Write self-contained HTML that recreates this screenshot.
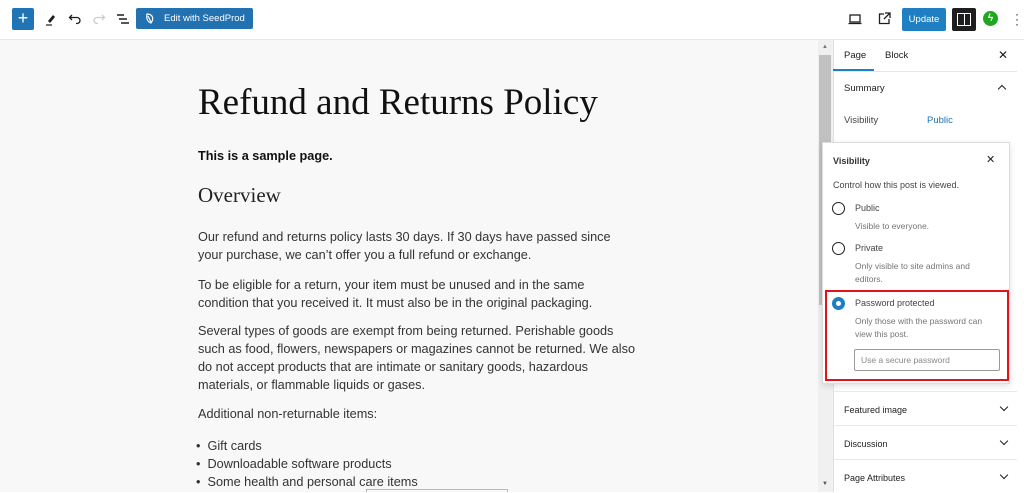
<!DOCTYPE html>
<html><head><meta charset="utf-8"><style>
*{margin:0;padding:0;box-sizing:border-box}
body{width:1024px;height:492px;overflow:hidden;background:#fff;font-family:"Liberation Sans",sans-serif;position:relative;color:#1e1e1e}
.a{position:absolute}
.top{left:0;top:0;width:1024px;height:40px;background:#fff;border-bottom:1px solid #e6e6e6}
.content{left:0;top:40px;width:818px;height:452px;background:#f8f8f8}
.p{position:absolute;left:198px;font-size:12.7px;color:#333;line-height:18px;white-space:nowrap}
.side{left:833px;top:40px;width:191px;height:452px;background:#fff;border-left:1px solid #e0e0e0}
.row{position:absolute;left:833px;width:184px;border-top:1px solid #e8e8e8;font-size:9px;color:#1e1e1e}
.chev{position:absolute;right:10px;top:0;width:6px;height:6px;border-right:1.3px solid #1e1e1e;border-bottom:1.3px solid #1e1e1e;transform:rotate(45deg)}
.rad{position:absolute;width:13px;height:13px;border:1.3px solid #1e1e1e;border-radius:50%}
.g{color:#757575;font-size:8.5px;line-height:13px}
</style></head><body>
<div class="a top"></div>
<div class="a" style="left:12px;top:8px;width:22px;height:22px;background:#1e74b5;border-radius:2px;color:#fff;font-size:18px;line-height:21px;text-align:center">+</div>
<svg class="a" style="left:44px;top:12px" width="14" height="14" viewBox="0 0 14 14"><path d="M4 9 L9 3 L11 5 L6 11Z" fill="#1e1e1e"/><path d="M2 13 H8" stroke="#1e1e1e" stroke-width="1.2"/></svg>
<svg class="a" style="left:68px;top:12px" width="14" height="14" viewBox="0 0 14 14"><path d="M4 3 L1.5 5.5 L4 8 M2 5.5 H9 A3 3 0 0 1 9 11.5 H8" fill="none" stroke="#1e1e1e" stroke-width="1.3"/></svg>
<svg class="a" style="left:92px;top:12px" width="14" height="14" viewBox="0 0 14 14"><path d="M10 3 L12.5 5.5 L10 8 M12 5.5 H5 A3 3 0 0 0 5 11.5 H6" fill="none" stroke="#ccc" stroke-width="1.3"/></svg>
<svg class="a" style="left:116px;top:12px" width="14" height="14" viewBox="0 0 14 14"><path d="M1 3 H8 M3 7 H11 M5 11 H13" stroke="#1e1e1e" stroke-width="1.4"/></svg>
<div class="a" style="left:136px;top:8px;width:117px;height:21px;background:#2271b1;border-radius:2px;color:#fff;font-size:9.5px;line-height:21px;padding-left:28px">Edit with SeedProd</div>
<svg class="a" style="left:145px;top:13px" width="10" height="11" viewBox="0 0 10 11"><path d="M2 1 C8 1 9 6 6 10 C3 9 1 6 2 1Z M3 3 L6 9" fill="none" stroke="#fff" stroke-width="1.2"/></svg>
<svg class="a" style="left:848px;top:13px" width="14" height="12" viewBox="0 0 14 12"><rect x="2" y="2" width="10" height="7" fill="none" stroke="#1e1e1e" stroke-width="1.3"/><path d="M0.5 10.5 H13.5" stroke="#1e1e1e" stroke-width="1.3"/></svg>
<svg class="a" style="left:878px;top:12px" width="13" height="13" viewBox="0 0 13 13"><path d="M6 2 H1.5 V11.5 H11 V7 M7 1 H12 V6 M12 1 L6 7" fill="none" stroke="#1e1e1e" stroke-width="1.3"/></svg>
<div class="a" style="left:902px;top:8px;width:44px;height:23px;background:#1e7fc3;border-radius:2px;color:#fff;font-size:9.5px;line-height:23px;text-align:center">Update</div>
<div class="a" style="left:952px;top:8px;width:24px;height:23px;background:#1e1e1e;border-radius:2px"></div>
<div class="a" style="left:957px;top:13px;width:14px;height:13px;border:1.3px solid #fff"></div>
<div class="a" style="left:964px;top:13px;width:1.3px;height:13px;background:#fff"></div>
<div class="a" style="left:983px;top:11px;width:15px;height:15px;border-radius:50%;background:#1fa71f;color:#fff;font-size:10px;line-height:15px;text-align:center;font-weight:bold">ϟ</div>
<div class="a" style="left:1015px;top:12px;font-size:12px;line-height:5px;color:#1e1e1e">·<br>·<br>·</div>

<div class="a content"></div>
<div class="p" style="top:80px;font-family:'Liberation Serif',serif;font-size:37px;line-height:46px;color:#111">Refund and Returns Policy</div>
<div class="p" style="top:147px;font-weight:bold;color:#111">This is a sample page.</div>
<div class="p" style="top:181px;font-family:'Liberation Serif',serif;font-size:21px;line-height:28px;color:#222">Overview</div>
<div class="p" style="top:228px">Our refund and returns policy lasts 30 days. If 30 days have passed since<br>your purchase, we can’t offer you a full refund or exchange.</div>
<div class="p" style="top:276px">To be eligible for a return, your item must be unused and in the same<br>condition that you received it. It must also be in the original packaging.</div>
<div class="p" style="top:322px">Several types of goods are exempt from being returned. Perishable goods<br>such as food, flowers, newspapers or magazines cannot be returned. We also<br>do not accept products that are intimate or sanitary goods, hazardous<br>materials, or flammable liquids or gases.</div>
<div class="p" style="top:405px">Additional non-returnable items:</div>
<div class="p" style="top:437px;left:196px">•&nbsp;&nbsp;Gift cards<br>•&nbsp;&nbsp;Downloadable software products<br>•&nbsp;&nbsp;Some health and personal care items</div>
<div class="a" style="left:366px;top:489px;width:142px;height:3px;border:1px solid #bbb;border-bottom:none"></div>

<div class="a" style="left:818px;top:40px;width:15px;height:452px;background:#f0f0f0"></div>
<div class="a" style="left:819px;top:55px;width:12px;height:250px;background:#c1c1c1"></div>
<div class="a" style="left:822px;top:44px;font-size:6px;color:#777">▲</div>
<div class="a" style="left:822px;top:481px;font-size:6px;color:#555">▼</div>

<div class="a side"></div>
<div class="a" style="left:844px;top:50px;font-size:9.5px">Page</div>
<div class="a" style="left:885px;top:50px;font-size:9.5px">Block</div>
<div class="a" style="left:998px;top:48px;font-size:12px">✕</div>
<div class="a" style="left:833px;top:69px;width:41px;height:2px;background:#1e7fc3"></div>
<div class="a" style="left:833px;top:71px;width:184px;height:1px;background:#e6e6e6"></div>
<div class="a" style="left:844px;top:83px;font-size:9.5px">Summary</div>
<div class="a" style="left:999px;top:86px;width:6px;height:6px;border-left:1.3px solid #1e1e1e;border-top:1.3px solid #1e1e1e;transform:rotate(45deg)"></div>
<div class="a" style="left:844px;top:115px;font-size:9.5px;color:#444">Visibility</div>
<div class="a" style="left:927px;top:115px;font-size:9.5px;color:#2271b1">Public</div>

<div class="row" style="top:391px;height:34px"><span style="position:absolute;left:11px;top:13px">Featured image</span><span class="chev" style="top:12px"></span></div>
<div class="row" style="top:425px;height:34px"><span style="position:absolute;left:11px;top:13px">Discussion</span><span class="chev" style="top:12px"></span></div>
<div class="row" style="top:459px;height:34px"><span style="position:absolute;left:11px;top:13px">Page Attributes</span><span class="chev" style="top:12px"></span></div>

<div class="a" style="left:822px;top:142px;width:188px;height:242px;background:#fff;border:1px solid #ddd;box-shadow:0 2px 6px rgba(0,0,0,.12)"></div>
<div class="a" style="left:833px;top:156px;font-size:9px;font-weight:bold;color:#333">Visibility</div>
<div class="a" style="left:986px;top:153px;font-size:11px">✕</div>
<div class="a" style="left:833px;top:180px;font-size:9px;color:#444">Control how this post is viewed.</div>
<div class="rad" style="left:832px;top:202px"></div>
<div class="a" style="left:855px;top:203px;font-size:9px;color:#444">Public</div>
<div class="a g" style="left:855px;top:220px">Visible to everyone.</div>
<div class="rad" style="left:832px;top:242px"></div>
<div class="a" style="left:855px;top:243px;font-size:9px;color:#444">Private</div>
<div class="a g" style="left:855px;top:260px">Only visible to site admins and<br>editors.</div>
<div class="a" style="left:832px;top:297px;width:13px;height:13px;border-radius:50%;background:#1e7fc3"></div>
<div class="a" style="left:836px;top:301px;width:5px;height:5px;border-radius:50%;background:#fff"></div>
<div class="a" style="left:855px;top:298px;font-size:9px;color:#444">Password protected</div>
<div class="a g" style="left:855px;top:315px">Only those with the password can<br>view this post.</div>
<div class="a" style="left:854px;top:349px;width:146px;height:22px;border:1px solid #999;border-radius:2px;font-size:8.5px;color:#888;line-height:20px;padding-left:6px">Use a secure password</div>
<div class="a" style="left:825px;top:290px;width:184px;height:91px;border:2px solid #e3121b"></div>
</body></html>
